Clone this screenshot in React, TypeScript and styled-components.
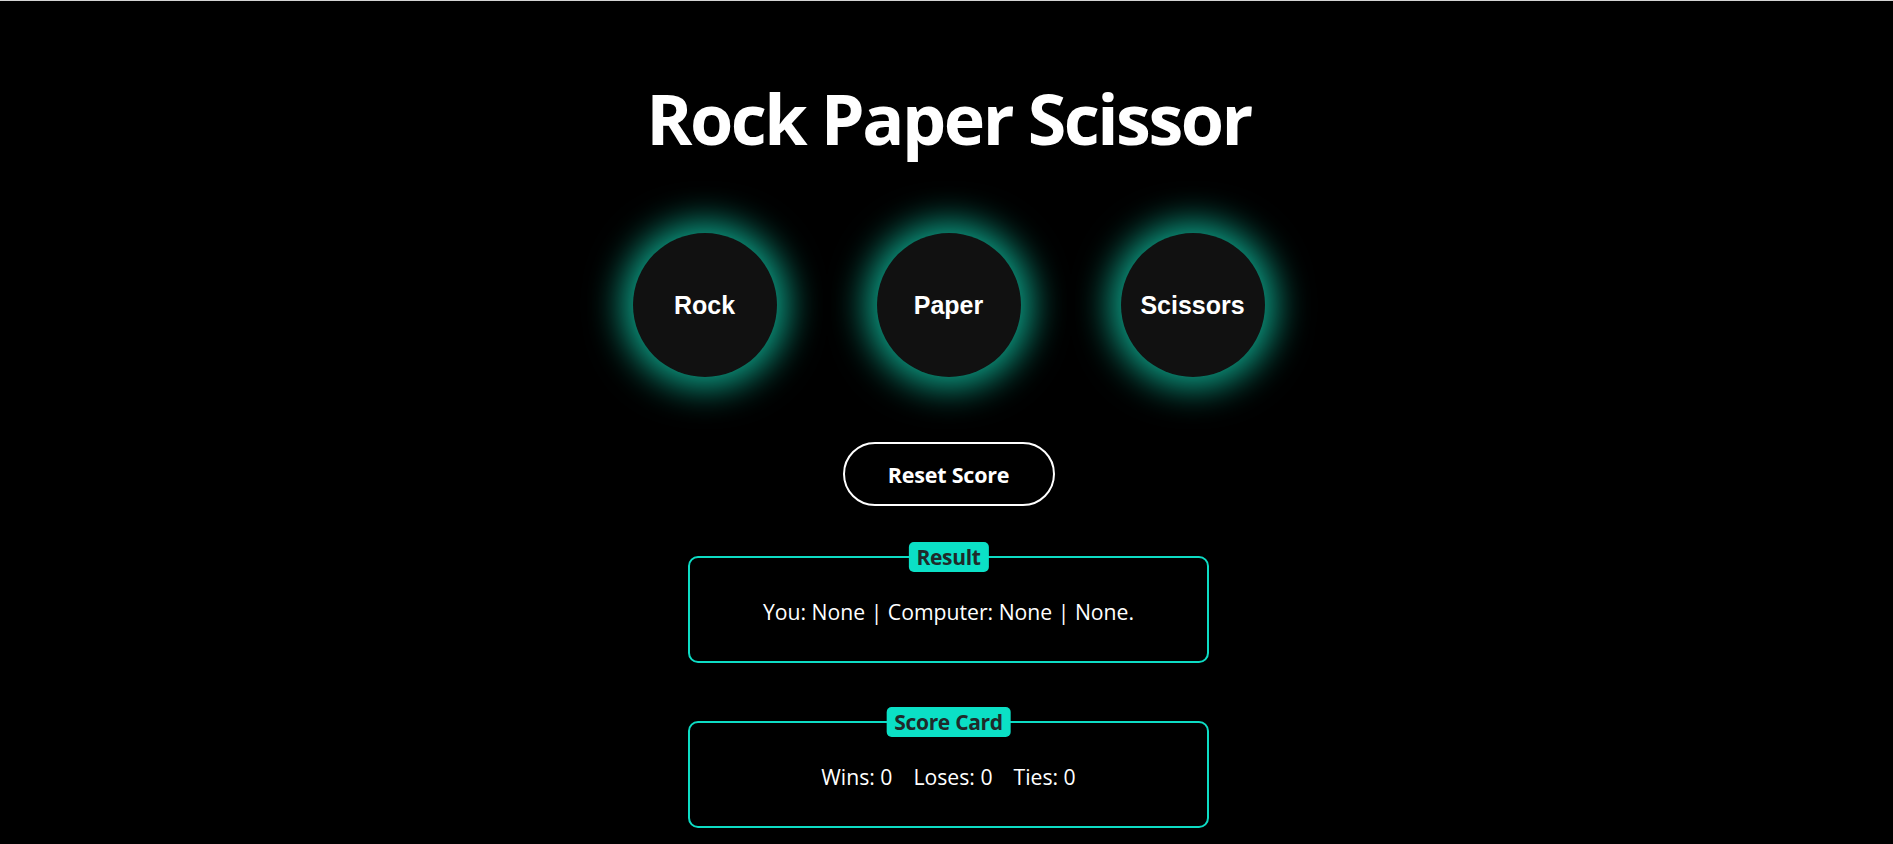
import React from "react";
import styled, { createGlobalStyle } from "styled-components";

const GlobalStyle = createGlobalStyle`
  html, body {
    margin: 0;
    padding: 0;
    background: #000;
  }
  body {
    font-family: "Open Sans", "Noto Sans", sans-serif;
    color: #fff;
  }
  * { box-sizing: border-box; }
`;

const Page = styled.div`
  min-height: 844px;
  border-top: 1px solid #d4d4d4;
  padding-left: 4px;
  display: flex;
  flex-direction: column;
  align-items: center;
  background: #000;
`;

const Title = styled.h1`
  margin: 82px 0 0;
  font-family: "Open Sans", sans-serif;
  font-weight: 700;
  font-size: 70px;
  line-height: 70px;
  letter-spacing: -2.5px;
  color: #fff;
`;

const Choices = styled.div`
  margin-top: 80px;
  display: flex;
  gap: 100px;
`;

const Choice = styled.button`
  width: 144px;
  height: 144px;
  border-radius: 50%;
  border: none;
  background: #111111;
  color: #fff;
  font-family: "Liberation Sans", Arial, sans-serif;
  font-weight: 700;
  font-size: 25px;
  display: flex;
  align-items: center;
  justify-content: center;
  box-shadow: 0 0 36px 10px rgba(16, 200, 168, 0.85);
  cursor: pointer;
  padding: 0;
`;

const ResetButton = styled.button`
  margin-top: 65px;
  width: 212px;
  height: 64px;
  border-radius: 32px;
  border: 2px solid #fff;
  background: #000;
  color: #fff;
  font-family: "Open Sans", sans-serif;
  font-weight: 700;
  font-size: 21.5px;
  letter-spacing: -0.2px;
  cursor: pointer;
  padding: 0;
`;

const Panel = styled.div<{ $gap: number }>`
  position: relative;
  margin-top: ${(p) => p.$gap}px;
  width: 521px;
  height: 107px;
  border: 2px solid #0ddcc4;
  border-radius: 10px;
  display: flex;
  align-items: center;
  justify-content: center;
  padding-top: 3px;
  font-family: "Open Sans", sans-serif;
  font-size: 21.2px;
  color: #fff;
`;

const Badge = styled.span`
  position: absolute;
  top: -16px;
  left: 50%;
  transform: translateX(-50%);
  height: 30px;
  padding: 0 8px;
  border-radius: 5px;
  background: #0be0c6;
  color: #1f2a2a;
  font-family: "Open Sans", sans-serif;
  font-weight: 700;
  font-size: 21px;
  letter-spacing: -0.3px;
  line-height: 30px;
  white-space: nowrap;
`;

const Scores = styled.div`
  display: flex;
  gap: 21px;
`;

export default function App() {
  return (
    <>
      <GlobalStyle />
      <Page>
        <Title>Rock Paper Scissor</Title>
        <Choices>
          <Choice>Rock</Choice>
          <Choice>Paper</Choice>
          <Choice>Scissors</Choice>
        </Choices>
        <ResetButton>Reset Score</ResetButton>
        <Panel $gap={50}>
          <Badge>Result</Badge>
          <span>You: None | Computer: None | None.</span>
        </Panel>
        <Panel $gap={58}>
          <Badge>Score Card</Badge>
          <Scores>
            <span>Wins: 0</span>
            <span>Loses: 0</span>
            <span>Ties: 0</span>
          </Scores>
        </Panel>
      </Page>
    </>
  );
}
